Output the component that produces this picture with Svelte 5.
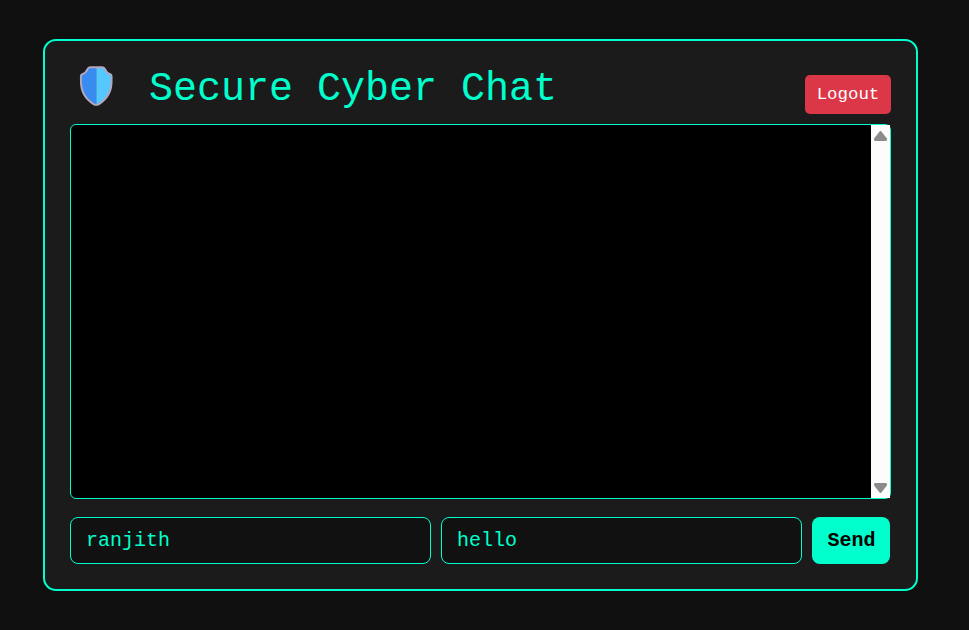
<script>
  let username = $state('ranjith');
  let message = $state('hello');
</script>

<main class="page">
  <section class="card">
    <header>
      <h1>
        <svg class="shield" viewBox="0 0 34 40" aria-hidden="true">
          <path class="left" d="M17.200 1H11C9.500 1 9 2 8.500 3.200Q7 7 3.300 8.100Q1.900 8.600 1.900 10.200V15.500C1.900 25.500 6 32.800 14.500 38.100Q16 39 17.200 39Z" />
          <path class="right" d="M17.200 1H23.500C25 1 25.500 2 26 3.200Q27.500 7 31.200 8.100Q32.600 8.600 32.600 10.200V15.500C32.600 25.500 28.500 32.800 20 38.100Q18.500 39 17.200 39Z" />
          <path class="rim" d="M11 1.200H23.500C25 1.200 25.500 2 26 3.200Q27.500 7 31.200 8.100Q32.600 8.600 32.600 10.200V15.500C32.600 25.500 28.500 32.800 20 38.100Q17.250 39.700 14.500 38.100C6 32.800 1.900 25.500 1.900 15.500V10.200Q1.900 8.600 3.300 8.100Q7 7 8.500 3.200C9 2 9.500 1.200 11 1.200Z" />
        </svg>
        <span class="title">Secure Cyber Chat</span>
      </h1>
      <button class="logout">Logout</button>
    </header>

    <div class="messages">
      <div class="scrollbar">
        <svg viewBox="0 0 19 20"><path d="M8.400 6.700Q9.500 5.500 10.600 6.700L15.700 13.300Q16.700 15.900 14.700 15.900H4.500Q2.300 15.900 3.300 13.300Z" /></svg>
        <svg viewBox="0 0 19 20"><path d="M8.400 14.300Q9.500 15.500 10.600 14.300L15.700 7.700Q16.700 5.100 14.700 5.100H4.500Q2.300 5.100 3.300 7.700Z" /></svg>
      </div>
    </div>

    <form onsubmit={(e) => e.preventDefault()}>
      <input bind:value={username} aria-label="Username" />
      <input bind:value={message} aria-label="Message" />
      <button class="send">Send</button>
    </form>
  </section>
</main>

<style>
  :global(body) {
    margin: 0;
    background: #0f0f0f;
  }
  * {
    box-sizing: border-box;
  }
  .page {
    height: 630px;
    padding: 39px 51px 39px 43px;
    overflow: hidden;
    background: #0f0f0f;
    font-family: 'Courier New', 'Liberation Mono', monospace;
    color: #00ffcc;
  }
  .card {
    width: 875px;
    height: 552px;
    padding: 23px 25px 25px;
    border: 2px solid #00ffcc;
    border-radius: 13px;
    background: #1b1b1b;
    display: flex;
    flex-direction: column;
  }
  header {
    height: 60px;
    display: flex;
    justify-content: space-between;
    align-items: flex-start;
  }
  h1 {
    margin: 0;
    padding-left: 9px;
    display: flex;
    align-items: flex-start;
    font-size: 40px;
    line-height: 48px;
    font-weight: 400;
  }
  .shield {
    width: 34px;
    height: 40px;
    margin: 2px 36px 0 0;
  }
  .title {
    margin-top: 2px;
  }
  .left {
    fill: #398cef;
  }
  .right {
    fill: #55c8ff;
  }
  .rim {
    fill: none;
    stroke: #b3a6bd;
    stroke-width: 1.9;
  }
  button {
    border: 0;
    padding: 0;
    font-family: inherit;
  }
  .logout {
    width: 86px;
    height: 39px;
    margin-top: 11px;
    border-radius: 5px;
    background: #dc3748;
    color: #fff;
    font-size: 17.4px;
  }
  .messages {
    height: 375px;
    border: 1px solid #00ffcc;
    border-radius: 6px;
    background: #000;
    display: flex;
    justify-content: flex-end;
  }
  .scrollbar {
    width: 19px;
    background: #fcfcfc;
    display: flex;
    flex-direction: column;
    justify-content: space-between;
  }
  .scrollbar svg {
    width: 19px;
    height: 20px;
    fill: #8b8b8b;
  }
  form {
    margin-top: 18px;
    display: flex;
    gap: 10px;
  }
  input {
    width: 361px;
    height: 47px;
    padding: 0 15px;
    border: 1px solid #00ffcc;
    border-radius: 8px;
    outline: 0;
    background: #111;
    color: #00ffcc;
    font-family: inherit;
    font-size: 20px;
  }
  .send {
    width: 78px;
    height: 47px;
    padding-left: 1px;
    border-radius: 8px;
    background: #00ffcc;
    color: #000;
    font-size: 20px;
    font-weight: 700;
  }
</style>
